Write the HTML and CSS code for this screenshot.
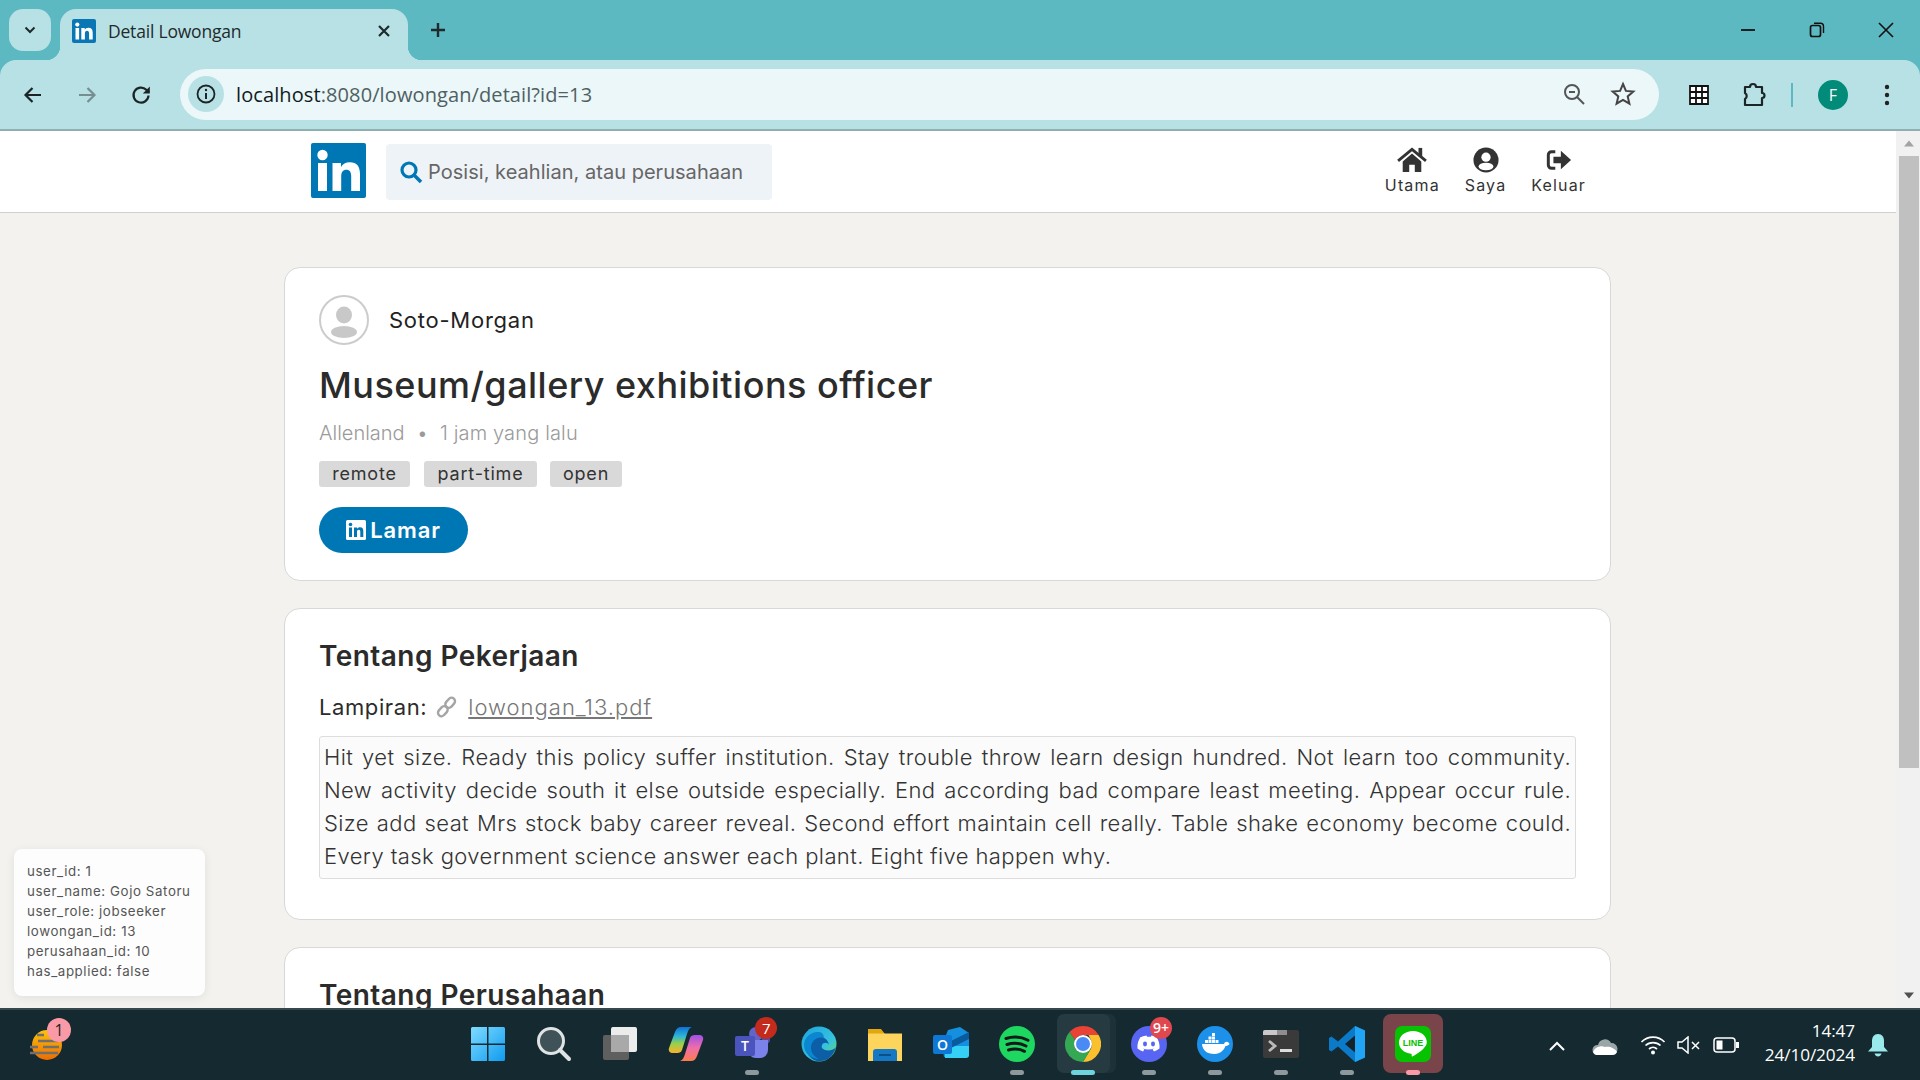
FILE: index.html
```html
<!DOCTYPE html>
<html lang="id">
<head>
<meta charset="utf-8">
<title>Detail Lowongan</title>
<link rel="stylesheet" href="styles.css">
</head>
<body>
<div class="screen">
  <header class="browser">
    <div class="tabstrip">
      <button class="tab-menu"><svg width="16" height="16" viewBox="0 0 16 16"><path d="M3.5 5.5 8 10l4.5-4.5" fill="none" stroke="#1f2a2c" stroke-width="2"/></svg></button>
      <div class="tab">
        <svg class="favicon" width="24" height="24" viewBox="0 0 24 24"><rect width="24" height="24" rx="2" fill="#0a76b4"/><rect x="3.5" y="9" width="3.6" height="11.5" fill="#fff"/><circle cx="5.3" cy="5.6" r="2.1" fill="#fff"/><path d="M9.3 9h3.4v1.7c.7-1.2 2-2 3.7-2 3 0 4.3 1.800 4.300 5v6.800h-3.600v-6c0-1.700-.6-2.800-2-2.800-1.500 0-2.200 1.100-2.200 2.800v6H9.300z" fill="#fff"/></svg>
        <span class="tab-title">Detail Lowongan</span>
        <svg class="tab-close" width="14" height="14" viewBox="0 0 14 14"><path d="M2 2l10 10M12 2 2 12" stroke="#1f2a2c" stroke-width="2.200"/></svg>
      </div>
      <svg class="tab-new" width="18" height="18" viewBox="0 0 18 18"><path d="M9 2v14M2 9h14" stroke="#1f2a2c" stroke-width="2.400"/></svg>
      <div class="win-controls">
        <svg width="16" height="16" viewBox="0 0 16 16"><path d="M1 8h14" stroke="#111" stroke-width="1.800"/></svg>
        <svg width="16" height="16" viewBox="0 0 16 16"><rect x="1.500" y="3.500" width="10" height="11" rx="2" fill="none" stroke="#111" stroke-width="1.700"/><path d="M5 1.300h6.500a3 3 0 0 1 3 3V11" fill="none" stroke="#111" stroke-width="1.400"/></svg>
        <svg width="16" height="16" viewBox="0 0 16 16"><path d="M1 1l14 14M15 1 1 15" stroke="#111" stroke-width="1.600"/></svg>
      </div>
    </div>
    <div class="toolbar">
      <svg class="tb-nav" width="22" height="22" viewBox="0 0 22 22"><path d="M19 11H4M10.500 4 3.500 11l7 7" fill="none" stroke="#1c2526" stroke-width="2.200"/></svg>
      <svg class="tb-nav" width="22" height="22" viewBox="0 0 22 22"><path d="M3 11h15M11.500 4l7 7-7 7" fill="none" stroke="#778e91" stroke-width="2.200"/></svg>
      <svg class="tb-nav" width="22" height="22" viewBox="0 0 22 22"><path d="M18.500 11.500a7.500 7.500 0 1 1-2.200-5.700L19 8.500" fill="none" stroke="#1c2526" stroke-width="2.200"/><path d="M19.800 2.500v7h-7z" fill="#1c2526"/></svg>
      <div class="omnibox">
        <span class="site-info"><svg width="22" height="22" viewBox="0 0 22 22"><circle cx="11" cy="11" r="8.500" fill="none" stroke="#1c2526" stroke-width="1.800"/><path d="M11 10v6" stroke="#1c2526" stroke-width="2"/><circle cx="11" cy="7" r="1.200" fill="#1c2526"/></svg></span>
        <span class="url"><span class="url-host">localhost</span>:8080/lowongan/detail?id=13</span>
        <svg class="omni-zoom" width="24" height="24" viewBox="0 0 24 24"><circle cx="10" cy="10" r="7" fill="none" stroke="#555" stroke-width="2"/><path d="M15 15l7 7" stroke="#555" stroke-width="2"/><path d="M7 10h6" stroke="#555" stroke-width="2"/></svg>
        <svg class="omni-star" width="26" height="26" viewBox="0 0 26 26"><path d="M13 3l2.900 6.900 7.400.6-5.600 4.900 1.700 7.300L13 18.800l-6.400 3.900 1.700-7.300-5.600-4.900 7.400-.6z" fill="none" stroke="#444" stroke-width="2"/></svg>
      </div>
      <svg class="tb-grid" width="22" height="22" viewBox="0 0 22 22"><rect x="1" y="1" width="20" height="20" rx="1" fill="#fff"/><path d="M2 2h18v18H2zM2 8h18M2 14h18M8 2v18M14 2v18" fill="none" stroke="#111" stroke-width="1.800"/></svg>
      <svg class="tb-puzzle" width="26" height="26" viewBox="0 0 26 26"><path d="M4 5h5a3 3 0 0 1 6 0h6v6a2.500 2.500 0 0 1 0 5v7H4v-6a3.500 3.500 0 0 0 0-6z" fill="none" stroke="#1c2526" stroke-width="2.200" stroke-linejoin="round"/></svg>
      <span class="tb-divider"></span>
      <span class="profile">F</span>
      <svg class="tb-dots" width="6" height="22" viewBox="0 0 6 22"><circle cx="3" cy="3" r="2.200" fill="#222"/><circle cx="3" cy="11" r="2.200" fill="#222"/><circle cx="3" cy="19" r="2.200" fill="#222"/></svg>
    </div>
  </header>

  <div class="viewport">
    <div class="page">
      <nav class="topnav">
        <div class="topnav-inner">
          <svg class="brand" width="55" height="55" viewBox="0 0 55 55"><rect width="55" height="55" rx="2" fill="#0077b5"/><rect x="7" y="20" width="9" height="28" fill="#fff"/><circle cx="11.500" cy="12" r="5.200" fill="#fff"/><path d="M21.500 20H30v4c1.700-3 4.800-4.800 8.700-4.800 7.300 0 10.300 4.300 10.300 12V48h-8.800V33.500c0-4.200-1.400-6.800-4.800-6.800-3.600 0-5.200 2.700-5.200 6.800V48h-8.700z" fill="#fff"/></svg>
          <div class="search">
            <svg width="24" height="24" viewBox="0 0 24 24"><circle cx="10" cy="10" r="7" fill="none" stroke="#0077b5" stroke-width="3.200"/><path d="M15.500 15.500 22 22" stroke="#0077b5" stroke-width="3.600"/></svg>
            <span class="search-text">Posisi, keahlian, atau perusahaan</span>
          </div>
          <div class="nav-links">
            <a class="nav-link nav-utama">
              <svg width="30" height="26" viewBox="0 0 32 28"><path d="M6 15.500 16 7l10 8.500V27h-7v-8h-6v8H6z" fill="#333"/><path d="M1 15 16 2.500 31 15" fill="none" stroke="#333" stroke-width="3"/><rect x="23" y="1" width="4" height="9" fill="#333"/></svg>
              <span>Utama</span>
            </a>
            <a class="nav-link nav-saya">
              <svg width="26" height="26" viewBox="0 0 28 28"><circle cx="14" cy="14" r="13.500" fill="#333"/><circle cx="14" cy="11" r="5" fill="#fff"/><ellipse cx="14" cy="21" rx="8" ry="4" fill="#fff"/></svg>
              <span>Saya</span>
            </a>
            <a class="nav-link nav-keluar">
              <svg width="26" height="26" viewBox="0 0 28 28"><path d="M10 5H6a3.500 3.500 0 0 0-3.500 3.500v11A3.500 3.500 0 0 0 6 23h4" fill="none" stroke="#333" stroke-width="3.200"/><path d="M8 10.500h8V4l11 10-11 10v-6.500H8z" fill="#333"/></svg>
              <span>Keluar</span>
            </a>
          </div>
        </div>
      </nav>

      <main class="content">
        <section class="card card-head">
          <div class="company">
            <svg width="50" height="50" viewBox="0 0 50 50"><circle cx="25" cy="25" r="24" fill="#fff" stroke="#ccc" stroke-width="2"/><ellipse cx="25" cy="20" rx="8" ry="8.500" fill="#c8c8c8"/><ellipse cx="25" cy="37" rx="13" ry="6" fill="#c8c8c8"/></svg>
            <span class="company-name">Soto-Morgan</span>
          </div>
          <h1 class="job-title">Museum/gallery exhibitions officer</h1>
          <p class="job-meta"><span>Allenland</span><span class="meta-dot">•</span><span class="meta-time">1 jam yang lalu</span></p>
          <div class="tags">
            <span class="tag tag-remote">remote</span>
            <span class="tag tag-part">part-time</span>
            <span class="tag tag-open">open</span>
          </div>
          <button class="apply">
            <svg width="20" height="20" viewBox="0 0 20 20"><rect width="20" height="20" rx="1.500" fill="#fff"/><rect x="3" y="7.500" width="3" height="9.500" fill="#0077b5"/><circle cx="4.500" cy="4.500" r="1.800" fill="#0077b5"/><path d="M8 7.500h3v1.300c.6-1 1.700-1.600 3-1.600 2.500 0 3.300 1.500 3.300 4V17h-3v-5.200c0-1.300-.4-2.100-1.500-2.100-1.200 0-1.800.8-1.800 2.100V17h-3z" fill="#0077b5"/></svg>
            <span>Lamar</span>
          </button>
        </section>

        <section class="card card-job">
          <h2 class="card-heading">Tentang Pekerjaan</h2>
          <p class="attachment">
            <span class="attach-label">Lampiran:</span>
            <svg width="22" height="22" viewBox="0 0 22 22"><g fill="none" stroke="#a5a5a5" stroke-width="2.400"><rect x="-6.500" y="-3.500" width="11" height="7" rx="3.500" transform="translate(7.500 14.500) rotate(-48)"/><rect x="-4.500" y="-3.500" width="11" height="7" rx="3.500" transform="translate(13.500 7.500) rotate(-48)"/></g></svg>
            <a class="attach-link">lowongan_13.pdf</a>
          </p>
          <div class="description">Hit yet size. Ready this policy suffer institution. Stay trouble throw learn design hundred. Not learn too community. New activity decide south it else outside especially. End according bad compare least meeting. Appear occur rule. Size add seat Mrs stock baby career reveal. Second effort maintain cell really. Table shake economy become could. Every task government science answer each plant. Eight five happen why.</div>
        </section>

        <section class="card card-company">
          <h2 class="card-heading">Tentang Perusahaan</h2>
        </section>
      </main>
    </div>

    <div class="scrollbar">
      <svg class="sb-arrow" width="22" height="24" viewBox="0 0 22 24"><path d="M6 15l5-6 5 6z" fill="#a3a3a3"/></svg>
      <div class="sb-thumb"></div>
      <svg class="sb-arrow sb-arrow-down" width="22" height="24" viewBox="0 0 22 24"><path d="M6 9l5 6 5-6z" fill="#505050"/></svg>
    </div>

    <aside class="debug">
      <div>user_id: 1</div>
      <div>user_name: Gojo Satoru</div>
      <div>user_role: jobseeker</div>
      <div>lowongan_id: 13</div>
      <div>perusahaan_id: 10</div>
      <div>has_applied: false</div>
    </aside>
  </div>

  <footer class="taskbar">
    <div class="weather">
      <svg width="36" height="36" viewBox="0 0 36 36"><defs><linearGradient id="sun" x1="0" y1="0" x2="0" y2="1"><stop offset="0" stop-color="#fcc30b"/><stop offset="1" stop-color="#ee6c00"/></linearGradient></defs><circle cx="18" cy="18" r="15" fill="url(#sun)"/><path d="M8 8h7M9 14h20M1 20h8M14 20h16M1 26h28" stroke="#6f6f6f" stroke-width="2.400"/></svg>
      <span class="weather-badge">1</span>
    </div>
    <div class="task-icons">
      <div class="slot"><svg width="36" height="36" viewBox="0 0 36 36"><defs><linearGradient id="w" x1="0" y1="0" x2="1" y2="1"><stop offset="0" stop-color="#7fdcff"/><stop offset="1" stop-color="#0f9bf0"/></linearGradient></defs><path d="M1 2.500A1.500 1.500 0 0 1 2.500 1H17v16.500H1zM18.500 1H33.500A1.500 1.500 0 0 1 35 2.500V17.500H18.500zM1 19H17V35H2.500A1.500 1.500 0 0 1 1 33.500zM18.500 19H35V33.500A1.500 1.500 0 0 1 33.500 35H18.500z" fill="url(#w)"/></svg></div>
      <div class="slot"><svg width="36" height="36" viewBox="0 0 36 36"><circle cx="15" cy="15" r="12.500" fill="#3e5257" stroke="#dfe3e3" stroke-width="3"/><path d="M24 24l9 9" stroke="#dfe3e3" stroke-width="4" stroke-linecap="round"/></svg></div>
      <div class="slot"><svg width="36" height="36" viewBox="0 0 36 36"><rect x="1" y="9" width="26" height="25" rx="2" fill="#5f5f5f"/><rect x="9" y="1" width="26" height="25" rx="2" fill="#ececec"/><rect x="9" y="9" width="18" height="17" fill="#a9a9a9"/></svg></div>
      <div class="slot"><svg width="36" height="36" viewBox="0 0 36 36"><defs><linearGradient id="c1" x1="0" y1="0" x2="0" y2="1"><stop offset="0" stop-color="#1270d8"/><stop offset=".35" stop-color="#2bb6d8"/><stop offset=".65" stop-color="#9bd048"/><stop offset="1" stop-color="#fbb02d"/></linearGradient><linearGradient id="c2" x1="0" y1="0" x2="0" y2="1"><stop offset="0" stop-color="#a050e8"/><stop offset=".5" stop-color="#f06ea8"/><stop offset="1" stop-color="#fb7d4c"/></linearGradient></defs><path d="M13 1h11c-3 1-4 4-5 7l-5 16c-.8 2.300-2.500 3-4.500 3H5c-3 0-5-2-4-5L7 6c1-3 3-5 6-5z" fill="url(#c1)"/><path d="M23 35H12c3-1 4-4 5-7l5-16c.8-2.300 2.500-3 4.500-3H31c3 0 5 2 4 5l-6 16c-1 3-3 5-6 5z" fill="url(#c2)"/></svg></div>
      <div class="slot"><svg width="36" height="36" viewBox="0 0 36 36"><circle cx="22" cy="8" r="7" fill="#6264c8"/><circle cx="32" cy="13" r="4.500" fill="#4e50a8"/><path d="M14 14h20v10a8 8 0 0 1-8 8h-4a8 8 0 0 1-8-8z" fill="#7b83eb"/><rect x="1" y="10" width="20" height="20" rx="2" fill="#4b53bc"/><text x="11" y="25" class="svg-t">T</text></svg><span class="dot"></span><span class="badge badge-red">7</span></div>
      <div class="slot"><svg width="36" height="36" viewBox="0 0 36 36"><defs><linearGradient id="e" x1="0" y1="0" x2="1" y2="1"><stop offset="0" stop-color="#1ea3d9"/><stop offset=".6" stop-color="#35c1e1"/><stop offset="1" stop-color="#6ee05a"/></linearGradient></defs><circle cx="18" cy="18" r="17.500" fill="url(#e)"/><path d="M35 21c-2 3-7 4-11 3-3-1-4-3-3-5 1-3 6-3 7 0-1-6-6-9-12-8-7 1-11 7-10 14 1 6 7 11 14 10 7 0 13-6 15-14z" fill="#0c5ea6"/><path d="M23 12c-7-2-13 3-13 10 0 5 4 9 8 11-7 0-15-5-15-14C3 11 11 5 18 6c3 0 5 3 5 6z" fill="#0b86d0"/></svg></div>
      <div class="slot"><svg width="36" height="36" viewBox="0 0 36 36"><path d="M1 3h13l4 5h17v27H1z" fill="#e1a70d"/><rect x="1" y="7.500" width="34" height="27.500" fill="#fdd45c"/><path d="M6 35V26a3 3 0 0 1 3-3h18a3 3 0 0 1 3 3v9z" fill="#1478c4"/><rect x="12" y="28" width="12" height="2" fill="#0d4f86"/></svg></div>
      <div class="slot"><svg width="36" height="36" viewBox="0 0 36 36"><path d="M15 4l12-3 9 6v21a3 3 0 0 1-3 3H11l-2-12z" fill="#1490df"/><path d="M12 20h24v9a3 3 0 0 1-3 3H12z" fill="#35d0f5"/><path d="M18 15l18-9v7l-18 9z" fill="#0a5a9e"/><rect x="0" y="9" width="19" height="19" rx="2" fill="#0f78d4"/><text x="9.500" y="24" class="svg-t">O</text></svg></div>
      <div class="slot"><svg width="36" height="36" viewBox="0 0 36 36"><circle cx="18" cy="18" r="18" fill="#1ed760"/><path d="M7 12.500c8-2.500 15-2 22 1.800M8 18.500c7-2 13-1.500 19 1.500M9.500 24c5.500-1.500 11-1.200 16 1.300" fill="none" stroke="#14191a" stroke-width="3" stroke-linecap="round"/></svg><span class="dot"></span></div>
      <div class="slot slot-chrome"><svg width="36" height="36" viewBox="0 0 36 36"><path d="M18 0a18 18 0 0 1 15.600 9H18a9 9 0 0 0-8 5L4.500 6A18 18 0 0 1 18 0z" fill="#ea4335"/><path d="M33.600 9A18 18 0 0 1 18 36l8-13.500A9 9 0 0 0 26 14l-2.500-5z" fill="#fbc02d"/><path d="M4.500 6 10 14a9 9 0 0 0 8 13l8-4.500L18 36A18 18 0 0 1 4.500 6z" fill="#34a853"/><circle cx="18" cy="18" r="9" fill="#fff"/><circle cx="18" cy="18" r="7" fill="#4a8af4"/></svg><span class="dot dot-active"></span></div>
      <div class="slot"><svg width="36" height="36" viewBox="0 0 36 36"><circle cx="18" cy="18" r="18" fill="#5865f2"/><path d="M10.500 11c2-.9 3.800-1.300 5-1.400l.6 1.200c1.300-.2 2.600-.2 3.800 0l.6-1.200c1.300.1 3 .5 5 1.400 2.300 3.500 3.400 7.400 3 11.500-1.700 1.300-3.600 2.300-5.600 2.900l-1.300-2.200c.8-.3 1.400-.6 2-1-3.800 1.700-8.400 1.700-12.200 0 .6.400 1.300.7 2 1l-1.300 2.200c-2-.6-3.900-1.600-5.600-2.900-.4-4.100.7-8 3-11.500z" fill="#fff"/><ellipse cx="14" cy="18" rx="2" ry="2.400" fill="#5865f2"/><ellipse cx="22" cy="18" rx="2" ry="2.400" fill="#5865f2"/></svg><span class="dot"></span><span class="badge badge-red badge-wide">9+</span></div>
      <div class="slot"><svg width="36" height="36" viewBox="0 0 36 36"><circle cx="18" cy="18" r="18" fill="#1d91ea"/><path d="M5 18h22c.5-1.500 2-2.500 3.500-2 1 .4 1.500 1 2 2-1 1.500-3 2-4 2-1.500 4-5 8-11 8-8 0-12-4-12.500-10z" fill="#fff"/><path d="M8 14h3v3H8zM11.500 14h3v3h-3zM15 14h3v3h-3zM18.500 14h3v3h-3zM11.500 10.500h3v3h-3zM15 10.500h3v3h-3zM15 7h3v3h-3z" fill="#fff"/></svg><span class="dot"></span></div>
      <div class="slot"><svg width="36" height="28" viewBox="0 0 36 28"><path d="M2 0h32a2 2 0 0 1 2 2v24a2 2 0 0 1-2 2H2a2 2 0 0 1-2-2V2a2 2 0 0 1 2-2z" fill="#3a3a3a"/><path d="M0 5V2a2 2 0 0 1 2-2h12v5z" fill="#c9c9c9"/><path d="M14 0h10v5H14z" fill="#8e8e8e"/><path d="M6 11l6 5-6 5" fill="none" stroke="#bbb" stroke-width="2.800"/><rect x="17" y="19" width="12" height="3" fill="#ddd"/></svg><span class="dot"></span></div>
      <div class="slot"><svg width="36" height="36" viewBox="0 0 36 36"><path d="M26 0l10 4.500v27L26 36 9 20.500 2.500 25.500 0 24V12l2.500-1.500L9 15.500z" fill="#0a7ac9"/><path d="M26 0l10 4.500v27L26 36z" fill="#20a4f3"/><path d="M26 9.500 16 18l10 8.500z" fill="#14222a"/></svg><span class="dot"></span></div>
      <div class="slot slot-line"><svg width="36" height="36" viewBox="0 0 36 36"><rect width="36" height="36" rx="7" fill="#06c200"/><path d="M18 5C10 5 4 10 4 16.500c0 6 5 10.500 12 11.300.9.200.8.900.6 2-.1.700.4.900 1.200.500 3-1.700 14-8 14-13.800C32 10 26 5 18 5z" fill="#fff"/><text x="18" y="20" class="svg-line">LINE</text></svg><span class="dot dot-pink"></span></div>
    </div>
    <div class="tray">
      <svg class="tray-chevron" width="18" height="12" viewBox="0 0 18 12"><path d="M2 10l7-7 7 7" fill="none" stroke="#fff" stroke-width="2"/></svg>
      <svg class="tray-cloud" width="26" height="18" viewBox="0 0 26 18"><path d="M6 8a7 7 0 0 1 13-2 6 6 0 0 1 1 12H5a5 5 0 0 1 1-10z" fill="#9aa5a8"/><path d="M1 15c2-5 8-7 12-5 4-1 10 1 12 5-1 2-2 3-5 3H5c-2 0-3-1-4-3z" fill="#fff"/></svg>
      <svg class="tray-wifi" width="26" height="20" viewBox="0 0 26 20"><path d="M1.500 7a16 16 0 0 1 23 0M5.500 10.500a11 11 0 0 1 15 0M9 14a6 6 0 0 1 8 0" fill="none" stroke="#fff" stroke-width="1.700"/><circle cx="13" cy="17.500" r="2" fill="#fff"/></svg>
      <svg class="tray-sound" width="24" height="18" viewBox="0 0 24 18"><path d="M1 6h4l6-5v16l-6-5H1z" fill="none" stroke="#fff" stroke-width="1.500"/><path d="M15 6l7 7M22 6l-7 7" stroke="#fff" stroke-width="1.500"/></svg>
      <svg class="tray-battery" width="26" height="16" viewBox="0 0 26 16"><rect x="1" y="1" width="21" height="14" rx="3" fill="none" stroke="#fff" stroke-width="1.500"/><rect x="3.500" y="3.500" width="6" height="9" fill="#fff"/><rect x="23" y="5" width="3" height="6" fill="#fff"/></svg>
      <div class="clock"><div>14:47</div><div>24/10/2024</div></div>
      <svg class="tray-bell" width="22" height="24" viewBox="0 0 22 24"><path d="M11 1c4 0 6 3 6 7v6l4 4.500H1L5 14V8c0-4 2-7 6-7z" fill="#9aeaec"/><path d="M7.500 20.500h7c-.5 2-2 3-3.500 3s-3-1-3.500-3z" fill="#9aeaec"/></svg>
    </div>
  </footer>
</div>
</body>
</html>
```

FILE: styles.css
```css
* { box-sizing: border-box; }
html, body { margin: 0; height: 100%; overflow: hidden; }
body { font-family: "Inter", "Noto Sans", sans-serif; color: #2b2b2b; }
svg { display: block; flex: none; }
p, h1, h2 { margin: 0; }
button { border: 0; font-family: inherit; padding: 0; }

.screen { width: 1920px; height: 1080px; display: flex; flex-direction: column; }

/* browser chrome */
.browser { background: #5cb8c1; flex: none; font-family: "Open Sans", sans-serif; }
.tabstrip { height: 60px; display: flex; align-items: flex-start; padding: 9px 0 0 9px; }
.tab-menu { width: 42px; height: 42px; border-radius: 14px; background: #b8e1e5; display: flex; align-items: center; justify-content: center; }
.tab { position: relative; margin-left: 9px; width: 348px; height: 51px; background: #b8e1e5; border-radius: 16px 16px 0 0; display: flex; align-items: center; padding: 0 0 8px 12px; }
.tab::before, .tab::after { content: ""; position: absolute; bottom: 0; width: 14px; height: 14px; }
.tab::before { left: -14px; background: radial-gradient(circle at 0 0, transparent 14px, #b8e1e5 14.500px); }
.tab::after { right: -14px; background: radial-gradient(circle at 100% 0, transparent 14px, #b8e1e5 14.500px); }
.tab-title { margin-left: 12px; font-size: 17.500px; letter-spacing: -.2px; color: #1f2a2c; flex: 1; white-space: nowrap; }
.tab-close { margin-right: 17px; }
.tab-new { margin: 12px 0 0 21px; }
.win-controls { margin-left: auto; display: flex; gap: 53px; padding: 13px 26px 0 0; }

.toolbar { height: 71px; background: #b8e1e5; border-radius: 16px 16px 0 0; border-bottom: 2px solid #8fb0b3; display: flex; align-items: center; padding-left: 22px; }
.tb-nav { margin-right: 32px; }
.tb-nav:nth-child(3) { margin-right: 28px; }
.omnibox { width: 1479px; height: 51px; margin-bottom: 1px; border-radius: 26px; background: #ebf7f8; display: flex; align-items: center; padding-left: 8px; }
.site-info { width: 36px; height: 36px; border-radius: 50%; background: #b8e1e5; display: flex; align-items: center; justify-content: center; }
.url { margin-left: 12px; font-size: 20px; letter-spacing: .1px; color: #4f6062; flex: 1; white-space: nowrap; }
.url-host { color: #111c1e; }
.omni-zoom { margin-right: 24px; }
.omni-star { margin-right: 23px; }
.tb-grid { margin-left: 29px; }
.tb-puzzle { margin-left: 31px; }
.tb-divider { width: 2px; height: 24px; background: #5cb8c1; margin-left: 24px; }
.profile { margin-left: 25px; width: 30px; height: 30px; border-radius: 50%; background: #018b78; color: #fff; font-size: 16px; display: flex; align-items: center; justify-content: center; }
.tb-dots { margin-left: 36px; }

/* page */
.viewport { position: relative; flex: 1; min-height: 0; display: flex; background: #f3f2ef; }
.page { flex: 1; min-width: 0; overflow: hidden; }
.topnav { height: 82px; background: #fff; border-bottom: 1px solid #d0d0d0; }
.topnav-inner { width: 1330px; margin-left: 284px; height: 81px; display: flex; align-items: flex-start; padding: 12px 0 0 27px; }
.search { margin-left: 20px; margin-top: 1px; width: 386px; height: 56px; border-radius: 4px; background: #eef3f8; display: flex; align-items: center; padding-left: 13px; }
.search-text { margin-left: 5px; font-size: 20px; letter-spacing: .03px; color: #666; white-space: nowrap; }
.nav-links { margin-left: auto; margin-top: 4px; display: flex; padding-right: 28px; }
.nav-link { display: flex; flex-direction: column; align-items: center; gap: 2px; font-size: 16px; letter-spacing: 1.150px; color: #333; }
.nav-saya { margin-left: 25px; }
.nav-keluar { margin-left: 25px; }

.content { width: 1327px; margin: 54px 0 0 284px; display: flex; flex-direction: column; gap: 27px; }
.card { background: #fff; border: 1px solid #d8d8d8; border-radius: 16px; padding: 0 34px; }
.card-head { height: 314px; padding-top: 27px; }
.card-job { height: 312px; padding-top: 26px; }
.card-company { height: 200px; padding-top: 26px; flex: none; }
.company { display: flex; align-items: center; gap: 20px; }
.company-name { font-size: 22px; letter-spacing: .75px; color: #222; }
.job-title { margin-top: 13px; font-size: 36px; line-height: 54px; font-weight: 500; letter-spacing: .48px; color: #2b2b2b; }
.job-meta { margin-top: 3.500px; display: flex; font-size: 20px; line-height: 34px; font-weight: 300; color: #9a9a9a; }
.meta-dot { margin: 0 12px; }
.meta-time { letter-spacing: .15px; }
.tags { display: flex; margin-top: 11px; }
.tag { height: 26px; border-radius: 3px; background: #d9d9d9; font-size: 18px; line-height: 26px; letter-spacing: .8px; color: #333; text-align: center; }
.tag-remote { width: 91px; }
.tag-part { width: 113px; margin-left: 14px; }
.tag-open { width: 72px; margin-left: 13px; }
.apply { margin-top: 20px; width: 149px; height: 46px; border-radius: 23px; background: #0077b5; color: #fff; display: flex; align-items: center; justify-content: center; gap: 4px; font-size: 22px; font-weight: 600; letter-spacing: .9px; }

.card-heading { font-size: 28px; line-height: 42px; font-weight: 600; letter-spacing: .45px; color: #2b2b2b; }
.attachment { margin-top: 14px; display: flex; align-items: center; font-size: 22px; line-height: 32px; }
.attach-label { letter-spacing: .6px; }
.attachment svg { margin-left: 9px; }
.attach-link { margin-left: 10px; color: #777; text-decoration: underline; font-weight: 300; letter-spacing: 1px; }
.description { margin-top: 13px; height: 143px; padding: 4px; border: 1px solid #ddd; border-radius: 3px; background: #fbfbfb; font-size: 22px; line-height: 33px; font-weight: 300; text-align: justify; color: #333; letter-spacing: .4px; }

.scrollbar { width: 24px; flex: none; background: #f1f1f1; display: flex; flex-direction: column; align-items: center; padding-left: 2px; }
.sb-arrow { height: 25px; }
.sb-thumb { width: 20px; height: 612px; background: #c0c0c0; }
.sb-arrow-down { margin-top: auto; }

.debug { position: absolute; left: 14px; top: 718px; width: 191px; height: 147px; padding: 12px 13px; border-radius: 8px; background: #fdfdfd; box-shadow: 0 2px 10px rgba(0,0,0,.08); font-size: 13.300px; line-height: 20px; letter-spacing: .6px; color: #555; white-space: nowrap; }

/* taskbar */
.taskbar { position: relative; height: 72px; flex: none; background: #142a30; border-top: 2px solid #37484d; display: flex; align-items: center; font-family: "Open Sans", sans-serif; }
.weather { position: relative; width: 455px; height: 36px; padding-left: 29px; margin-top: -1px; }
.weather-badge { position: absolute; left: 47px; top: -9px; width: 24px; height: 24px; border-radius: 50%; background: #fa9aa6; color: #222; font-size: 16px; line-height: 24px; text-align: center; }
.task-icons { display: flex; margin-top: -2px; }
.slot { position: relative; width: 66.100px; height: 72px; display: flex; align-items: center; justify-content: center; }
.slot-chrome::before { content: ""; position: absolute; left: 7px; top: 6px; width: 53px; height: 59px; border-radius: 7px; background: #263b41; box-shadow: 6px 0 0 #1d3238; }
.slot-line::before { content: ""; position: absolute; left: 3px; top: 6px; width: 60px; height: 59px; border-radius: 8px; background: #7a454a; }
.slot svg { position: relative; }
.dot { position: absolute; left: 26px; bottom: 5px; width: 14px; height: 5px; border-radius: 3px; background: #8d999c; }
.dot-active { left: 21px; width: 24px; background: #6fd3dc; }
.dot-pink { background: #fa9aa6; }
.badge { position: absolute; top: 9px; left: 36px; min-width: 22px; height: 22px; border-radius: 11px; background: #c42b1c; color: #fff; font-size: 15px; line-height: 22px; text-align: center; }
.badge-wide { left: 34px; background: #e0474f; font-size: 14px; font-weight: 600; }
.svg-t { fill: #fff; font-family: "Open Sans", sans-serif; font-size: 14px; font-weight: 600; text-anchor: middle; }
.svg-line { fill: #06c200; font-family: "Liberation Sans", sans-serif; font-size: 9px; font-weight: 700; text-anchor: middle; }

.tray { position: absolute; left: 0; top: 0; height: 70px; width: 100%; pointer-events: none; }
.tray-chevron, .tray-cloud, .tray-wifi, .tray-sound, .tray-battery, .tray-bell, .clock { position: absolute; }
.tray-chevron { left: 1548px; top: 30px; }
.tray-cloud { left: 1592px; top: 27px; }
.tray-wifi { left: 1640px; top: 25px; }
.tray-sound { left: 1677px; top: 26px; }
.tray-battery { left: 1713px; top: 27px; }
.clock { right: 65px; top: 9px; text-align: right; color: #fff; font-size: 17.200px; line-height: 24px; letter-spacing: -.1px; }
.tray-bell { left: 1867px; top: 23px; }
```
